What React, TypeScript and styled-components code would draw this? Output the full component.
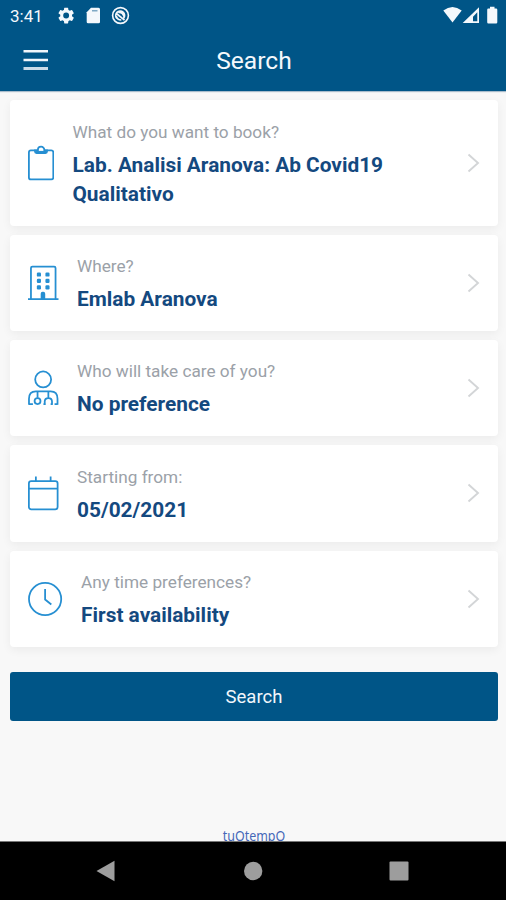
import React from "react";
import styled, { createGlobalStyle } from "styled-components";

const GlobalStyle = createGlobalStyle`
  * { box-sizing: border-box; }
  body { margin: 0; background: #f8f8f8; }
`;

const Screen = styled.div`
  width: 506px;
  height: 900px;
  display: flex;
  flex-direction: column;
  overflow: hidden;
  background: #f8f8f8;
  font-family: Roboto, "Liberation Sans", sans-serif;
`;

const Header = styled.header`
  flex: none;
  height: 91px;
  background: #005587;
  color: #f4f8fc;
  box-shadow: 0 1px 1px #a9bccb;
`;

const StatusBar = styled.div`
  height: 32px;
  padding: 0 8px 0 10px;
  display: flex;
  align-items: center;
  justify-content: space-between;
`;

const StatusGroup = styled.div`
  display: flex;
  align-items: center;
`;

const Clock = styled.span`
  width: 47px;
  font-size: 17px;
  line-height: 32px;
`;

const TitleBar = styled.div`
  height: 59px;
  padding: 0 23px;
  display: grid;
  grid-template-columns: 26px 1fr 26px;
  align-items: center;
`;

const MenuButton = styled.button`
  width: 26px;
  height: 22px;
  margin-top: -4px;
  padding: 0;
  border: 0;
  background: none;
  display: flex;
`;

const Title = styled.h1`
  margin: -2px 0 0 2px;
  text-align: center;
  font-size: 24.6px;
  font-weight: 400;
  line-height: 30px;
`;

const Content = styled.main`
  flex: 1;
  min-height: 0;
  padding: 9.4px 8px 0 10px;
  display: flex;
  flex-direction: column;
  align-items: stretch;
  overflow: hidden;
`;

const CardList = styled.div`
  display: flex;
  flex-direction: column;
  gap: 9px;
`;

const Card = styled.div`
  padding: 19.5px 17px 16.8px 18px;
  display: flex;
  align-items: center;
  background: #fff;
  border-radius: 4px;
  box-shadow: 0 3px 10px rgba(0, 0, 0, 0.055);
`;

const IconSlot = styled.div<{ $w: number }>`
  flex: none;
  width: ${(p) => p.$w}px;
  height: 36px;
  margin: -21px 18.5px -18px 0;
  display: flex;
`;

const CardText = styled.div`
  flex: 1;
`;

const Label = styled.div`
  margin-bottom: 7px;
  font-size: 17.2px;
  line-height: 24px;
  color: #9ba1a8;
`;

const Value = styled.div`
  max-width: 340px;
  font-size: 20.85px;
  font-weight: 700;
  line-height: 29px;
  color: #14497f;
`;

const Chevron = styled.svg`
  flex: none;
  margin-top: -3px;
`;

const SearchButton = styled.button`
  flex: none;
  height: 49px;
  margin-top: 25.3px;
  padding: 2px 0 0;
  border: 0;
  border-radius: 3px;
  background: #005587;
  color: #f1f6fb;
  font: 400 18.5px/47px Roboto, sans-serif;
`;

const Brand = styled.footer`
  margin-top: auto;
  height: 14px;
  overflow: hidden;
  text-align: center;
  font: 400 14px/17px "Noto Sans", sans-serif;
  color: #4668b8;
  transform: scaleX(0.89);
`;

const NavBar = styled.nav`
  flex: none;
  height: 59px;
  background: #000;
  border-top: 1px solid #777;
  display: grid;
  grid-template-columns: 19px 20px 20px;
  justify-content: space-between;
  align-items: center;
  padding: 0 97px 0 96px;

  circle {
    transform: translateX(1.2px);
  }
`;

const stroke = { fill: "none", stroke: "#268fd2", strokeWidth: 1.8 } as const;

const ClipboardIcon = () => (
  <svg width="26" height="36" viewBox="0 0 26 36" {...stroke}>
    <rect x="0.9" y="5.4" width="24.4" height="29" rx="2" />
    <path
      d="M7 5.4v1.100q0 1.500 1.500 1.500h9q1.500 0 1.500-1.500V5.400h-2.700v-.6a3.200 3.200 0 0 0-6.400 0v.6z"
      fill="#fff"
    />
    <path d="M8 6.800h10" />
  </svg>
);

const BuildingIcon = () => (
  <svg width="31" height="36" viewBox="0 0 31 36" {...stroke}>
    <path d="M3 34V2.800q0-1.400 1.400-1.400h22.200q1.400 0 1.400 1.400V34M0 34.400h31" />
    <path d="M13.800 34v-5q0-1.300 1-1.300h.8q1 0 1 1.300v5z" fill="#268fd2" />
    <g fill="#268fd2" stroke="none">
      {[7.3, 13.8, 20.3].map((y) =>
        [9, 17.7].map((x) => <rect key={`${x}-${y}`} x={x} y={y} width="4.200" height="4.200" rx="1.200" />)
      )}
    </g>
  </svg>
);

const DoctorIcon = () => (
  <svg width="31" height="36" viewBox="0 0 31 36" {...stroke}>
    <circle cx="15.4" cy="9.3" r="8.100" />
    <path d="M1 35v-6q0-7.500 7-7.500h15q7 0 7 7.500v6" />
    <path d="M9.700 21.500v6.500M20.700 21.500v6.500M17 35v-3.200q0-3.600 3.700-3.600t3.700 3.600V35M5 34.500H1M30 34.500h-3M15.700 34.500h2.300M23 34.500h2" />
    <circle cx="9.7" cy="31.300" r="3" />
  </svg>
);

const CalendarIcon = () => (
  <svg width="31" height="36" viewBox="0 0 31 36" {...stroke}>
    <rect x="0.9" y="6" width="29.2" height="28.7" rx="2.4" />
    <path d="M1 13.5h29M8 1.300V6M23 1.300V6" />
  </svg>
);

const ClockIcon = () => (
  <svg width="35" height="36" viewBox="0 0 35 36" {...stroke}>
    <circle cx="17.3" cy="18" r="16.3" />
    <path d="M17.300 8v10.500l6.300 5" />
  </svg>
);

const cards = [
  { icon: <ClipboardIcon />, w: 26, label: "What do you want to book?", value: "Lab. Analisi Aranova: Ab Covid19 Qualitativo" },
  { icon: <BuildingIcon />, w: 30.5, label: "Where?", value: "Emlab Aranova" },
  { icon: <DoctorIcon />, w: 30.5, label: "Who will take care of you?", value: "No preference" },
  { icon: <CalendarIcon />, w: 30.5, label: "Starting from:", value: "05/02/2021" },
  { icon: <ClockIcon />, w: 34.6, label: "Any time preferences?", value: "First availability" },
];

const StatusIcons = () => (
  <svg width="74" height="20" viewBox="57 6 74 20" fill="#f4f8fc">
    <g transform="translate(56.3 5.7) scale(.82)">
      <path d="M19.14 12.94c.04-.3.06-.61.06-.94s-.02-.64-.07-.94l2.03-1.58a.49.49 0 0 0 .12-.61l-1.92-3.32a.49.49 0 0 0-.59-.22l-2.39.96a7 7 0 0 0-1.62-.94l-.36-2.54a.48.48 0 0 0-.48-.41h-3.84a.48.48 0 0 0-.47.41l-.36 2.54a7.400 7.400 0 0 0-1.62.94l-2.39-.96a.48.48 0 0 0-.59.22L2.740 8.870a.48.48 0 0 0 .12.61l2.030 1.580a7 7 0 0 0 0 1.880l-2.030 1.580a.49.49 0 0 0-.12.61l1.920 3.320c.12.22.37.29.59.22l2.390-.96c.5.38 1.030.7 1.620.94l.36 2.540c.05.24.24.41.48.41h3.840c.24 0 .44-.17.47-.41l.36-2.540a7 7 0 0 0 1.620-.94l2.390.96c.22.08.47 0 .59-.22l1.920-3.320a.48.48 0 0 0-.12-.61zM12 15.600a3.600 3.600 0 1 1 0-7.200 3.600 3.600 0 0 1 0 7.200z" />
    </g>
    <path d="M91 7.800h7.500q1.500 0 1.500 1.500v12.700q0 1.300-1.500 1.300h-10.300q-1.500 0-1.500-1.300V12.200z" />
    <path d="M92 10h5.500v1.500H92z" fill="#7fa9c5" />
    <g fill="none" stroke="#f4f8fc">
      <circle cx="120.500" cy="15.500" r="7.900" strokeWidth="1.600" />
      <path d="M117 18.500a4.400 4.400 0 1 1 6.600-.3M115.800 13l8.700 7.200M118.500 12.500q4-.5 5.500 4" strokeWidth="1.700" />
      <path d="M116.300 16q.8 4 5 4" strokeWidth="1.500" />
    </g>
  </svg>
);

const SignalIcons = () => (
  <svg width="56" height="20" viewBox="442 6 56 20" fill="#f4f8fc">
    <path d="M443.300 10.500q9.200-7 18.400 0L452.500 22.500z" />
    <path fillRule="evenodd" d="M479 7.200V23h-16.300zM477.300 12.300l-4.300 4.500V21.300h4.300z" />
    <path d="M490 6.700h4.500v1.800h1.600q1.200 0 1.200 1.200v12.500q0 1.200-1.200 1.200h-7.700q-1.200 0-1.200-1.200V9.700q0-1.200 1.200-1.200h1.600z" />
  </svg>
);

export default function App() {
  return (
    <Screen>
      <GlobalStyle />
      <Header>
        <StatusBar>
          <StatusGroup>
            <Clock>3:41</Clock>
            <StatusIcons />
          </StatusGroup>
          <SignalIcons />
        </StatusBar>
        <TitleBar>
          <MenuButton aria-label="Menu">
            <svg width="26" height="22" viewBox="0 0 26 22" fill="#f1f6fb">
              <path d="M.5 1h24.500v2.500H.5zM.5 9.700h24.500v2.500H.5z" />
              <path d="M.5 18h24.500v3H.5z" fill="#cbdbe8" />
            </svg>
          </MenuButton>
          <Title>Search</Title>
        </TitleBar>
      </Header>
      <Content>
        <CardList>
          {cards.map((c) => (
            <Card key={c.label}>
              <IconSlot $w={c.w}>{c.icon}</IconSlot>
              <CardText>
                <Label>{c.label}</Label>
                <Value>{c.value}</Value>
              </CardText>
              <Chevron width="14" height="20" viewBox="0 0 14 20" fill="none" stroke="#d3d5d7" strokeWidth="1.900">
                <path d="M1.500 1.500l9.500 8.500-9.500 8.500" />
              </Chevron>
            </Card>
          ))}
        </CardList>
        <SearchButton>Search</SearchButton>
        <Brand>tuOtempO</Brand>
      </Content>
      <NavBar>
        <svg width="19" height="22" viewBox="0 0 19 22" fill="#9d9d9d"><path d="M.5 11L18.500.7v20.600z" /></svg>
        <svg width="20" height="20" viewBox="0 0 20 20" fill="#9d9d9d" overflow="visible"><circle cx="10" cy="10" r="9.200" /></svg>
        <svg width="20" height="20" viewBox="0 0 20 20" fill="#9d9d9d"><rect x=".5" y=".5" width="19" height="19" rx="1" /></svg>
      </NavBar>
    </Screen>
  );
}
